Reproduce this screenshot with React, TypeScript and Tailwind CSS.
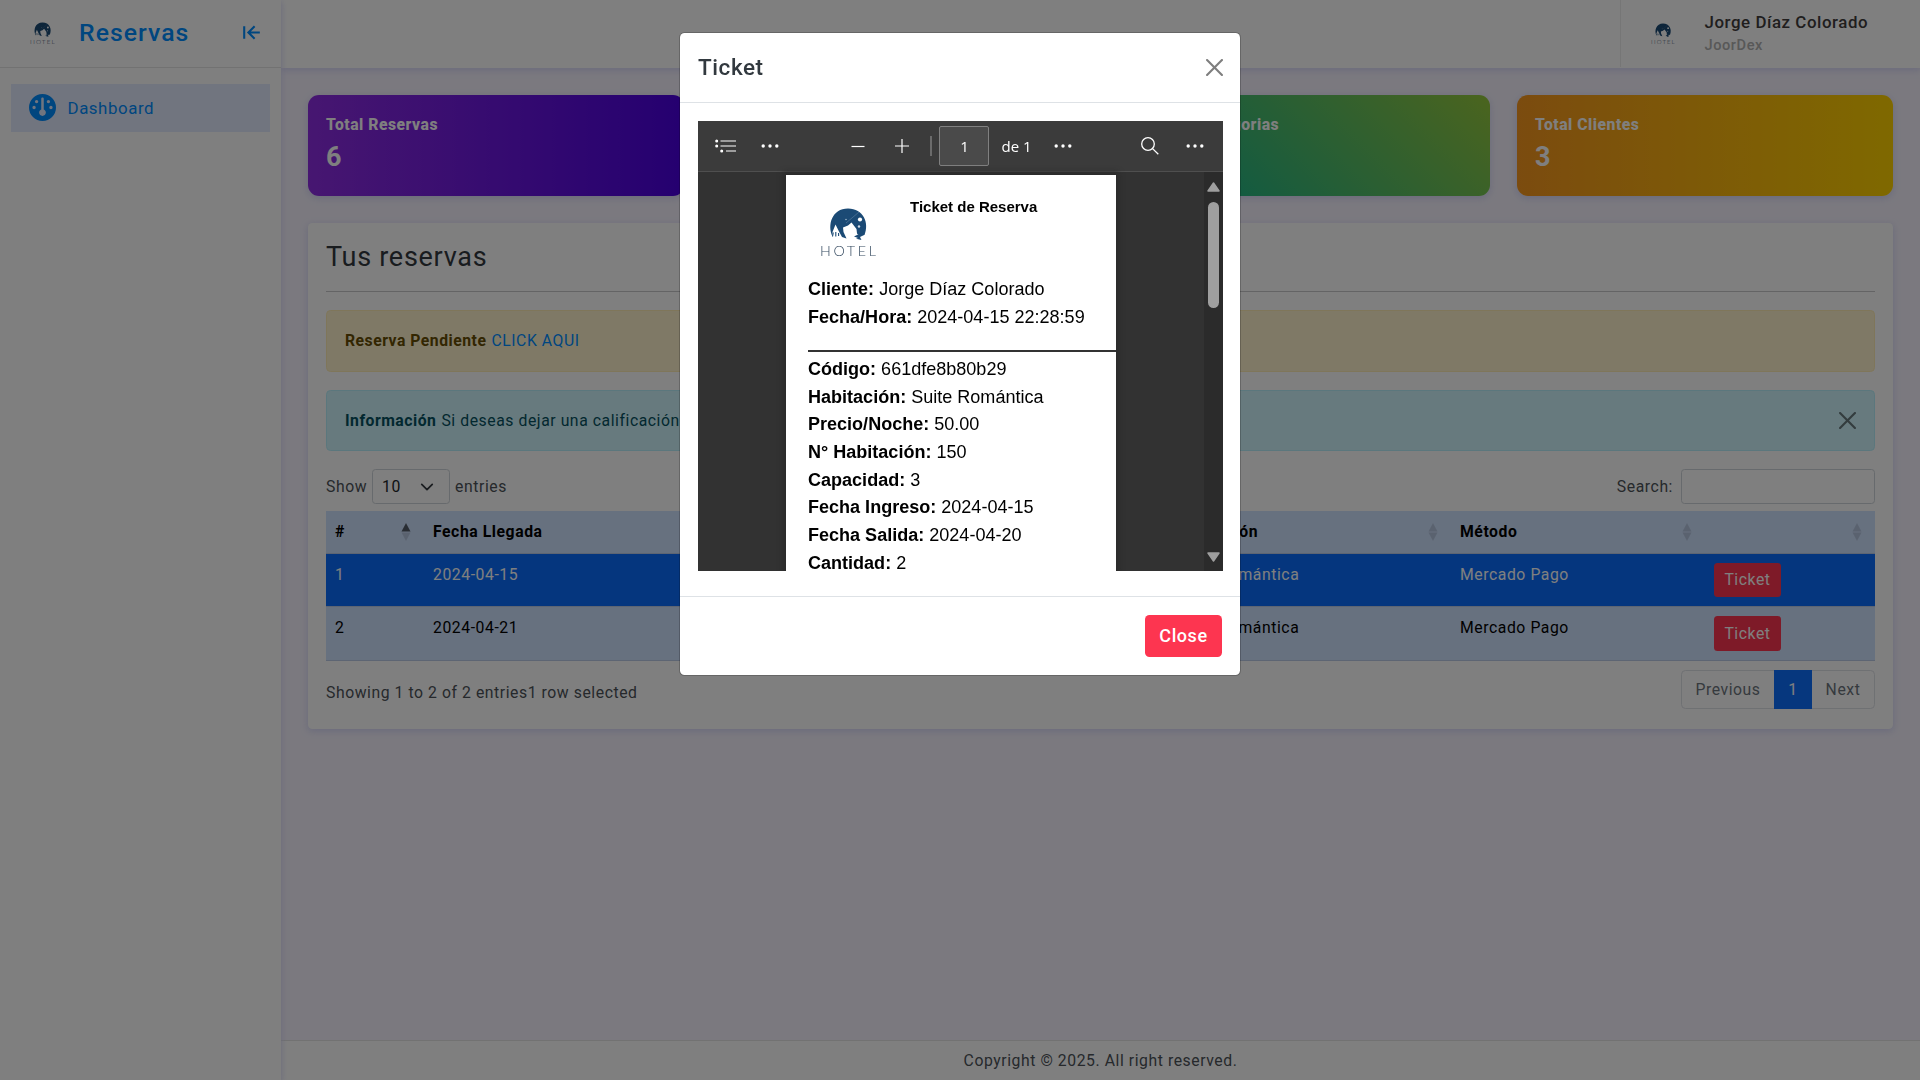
import React from "react";
import { BiArrowToLeft } from "react-icons/bi";
import { FaGauge } from "react-icons/fa6";

function HotelLogo({ className }: { className: string }) {
  return (
    <svg viewBox="0 0 60 54" className={className}>
      <path
        d="M14.500 31.500 C9 20 14 3.500 30 3.500 C45.500 3.500 51.500 18 46.500 30 L41 30.500 L39 28.500 L38.500 24 L33.500 17.500 L30 20.500 L25 22.500 L25.500 27 L28.500 33.500 L24 32 L21 26.500 L17.500 19.500 L14.500 27 Z"
        fill="#1b4a75"
      />
      <path d="M14.500 31.500 l.8 -4 M17.800 31.500 V27 M20.600 31 V28" stroke="#1b4a75" strokeWidth="1.100" />
      <path d="M36 31.500 L40 29.500 L46 30 L42 32 L43.500 35 L38 33.800 L40 33 Z" fill="#1b4a75" />
      <circle cx="42" cy="14.500" r="2.100" fill="#fff" />
      <circle cx="41" cy="21.500" r="1.200" fill="#cfdae5" />
      <circle cx="28" cy="14.500" r=".8" fill="#9db4c8" />
      <path d="M28 18 L41 7" stroke="#6d8ba8" strokeWidth=".5" />
      <text x="2" y="51" textLength="56" fontSize="14.300" fill="#34495f" fontFamily="Lato, sans-serif" fontWeight="300">HOTEL</text>
    </svg>
  );
}

function CloseX({ className }: { className: string }) {
  return (
    <svg viewBox="0 0 16 16" className={className}>
      <path
        fill="#000"
        d="M.293.293a1 1 0 011.414 0L8 6.586 14.293.293a1 1 0 111.414 1.414L9.414 8l6.293 6.293a1 1 0 01-1.414 1.414L8 9.414l-6.293 6.293a1 1 0 01-1.414-1.414L6.586 8 .293 1.707a1 1 0 010-1.414z"
      />
    </svg>
  );
}

function Sort({ asc = false }: { asc?: boolean }) {
  return (
    <svg viewBox="0 0 10 20" className="mr-[13px] h-[20px] w-[10px] shrink-0">
      <path d="M5 1 L9.500 9.500 H.5 Z" fill="#000" opacity={asc ? 0.6 : 0.125} />
      <path d="M5 19 L9.500 10.500 H.5 Z" fill="#000" opacity="0.125" />
    </svg>
  );
}

const stats = [
  { title: "Total Reservas", value: 6, bg: "bg-[linear-gradient(to_right,#8e2de2,#4a00e0)]" },
  { title: "Total Habitaciones", value: 5, bg: "bg-[linear-gradient(to_right,#f80759,#bc4e9c)]" },
  { title: "Total de Categorias", value: 3, bg: "bg-[linear-gradient(45deg,#00b09b,#96c93d)]" },
  { title: "Total Clientes", value: 3, bg: "bg-[linear-gradient(to_right,#f7971e,#ffd200)]" },
];

const headers = ["#", "Fecha Llegada", "", "", "Habitación", "Método", ""];
const rows = [
  ["1", "2024-04-15", "", "", "Suite Romántica", "Mercado Pago"],
  ["2", "2024-04-21", "", "", "Suite Romántica", "Mercado Pago"],
];
const cols = "grid grid-cols-[98px_300px_220px_223px_284px_254px_170px]";

const ticket = [
  ["Código:", "661dfe8b80b29"],
  ["Habitación:", "Suite Romántica"],
  ["Precio/Noche:", "50.00"],
  ["N° Habitación:", "150"],
  ["Capacidad:", "3"],
  ["Fecha Ingreso:", "2024-04-15"],
  ["Fecha Salida:", "2024-04-20"],
  ["Cantidad:", "2"],
];

function Dots() {
  return (
    <svg viewBox="0 0 18 4" className="h-1 w-[18px] shrink-0" fill="#fff">
      <circle cx="2.200" cy="2" r="1.700" />
      <circle cx="9" cy="2" r="1.700" />
      <circle cx="15.800" cy="2" r="1.700" />
    </svg>
  );
}

function Sidebar() {
  return (
    <aside className="z-10 w-[281px] shrink-0 bg-white shadow-[0_2px_6px_rgba(218,218,253,0.65),0_2px_6px_rgba(206,206,238,0.54)]">
      <div className="flex h-[68px] items-center border-b border-[#e4e4e4]">
        <HotelLogo className="ml-[29px] mt-[-1px] h-[24.300px] w-[27px]" />
        <span className="ml-[23px] mt-[-2px] text-[24.750px] font-medium tracking-[1.050px] text-[#008cff]">Reservas</span>
        <BiArrowToLeft className="ml-auto mr-[17px] mt-[-3px] size-[25px] text-[#008cff]" />
      </div>
      <div className="ml-[11px] mt-[16px] flex h-[48px] w-[259px] items-center bg-[#e2eafe] pl-[18px] text-[#008cff]">
        <FaGauge className="mt-[-1px] size-[27px]" />
        <span className="ml-[11.500px] mt-[1px] text-[16.875px]">Dashboard</span>
      </div>
    </aside>
  );
}

function Topbar() {
  return (
    <header className="flex h-[68px] justify-end bg-white shadow-[0_2px_6px_rgba(218,218,253,0.65),0_2px_6px_rgba(206,206,238,0.54)]">
      <div className="flex h-[67px] w-[300px] border-l border-[#ededed]">
        <HotelLogo className="ml-[29px] mt-[22px] h-[23px] w-[26px]" />
        <div className="ml-[28.500px] mt-[11px] font-medium">
          <p className="text-[16.875px] leading-[22px] text-[#413c3c]">Jorge Díaz Colorado</p>
          <p className="mt-[1px] text-[14.600px] leading-[22px] text-[#b0b0b0]">JoorDex</p>
        </div>
      </div>
    </header>
  );
}

function Reservations() {
  return (
    <section className="mt-[27px] h-[506px] rounded-[4.500px] bg-white px-[18px] pt-[18px] shadow-[0_2px_6px_rgba(218,218,253,0.65),0_2px_6px_rgba(206,206,238,0.54)]">
      <h4 className="h-[50px] text-[27px] leading-[32px] tracking-[0.720px] text-[#32393f]">Tus reservas</h4>
      <div className="h-px bg-[#c8c9ca]" />
      <div className="mt-[18px] flex h-[62px] items-center rounded-[4.500px] border border-[#ffecb5] bg-[#fff3cd] px-[18px] text-[#664d03]">
        <b className="tracking-[0.5px]">Reserva Pendiente</b>
        <span className="ml-[5px] text-[#008cff]">CLICK AQUI</span>
      </div>
      <div className="mt-[18px] flex h-[61px] items-center rounded-[4.500px] border border-[#b6effb] bg-[#cff4fc] px-[18px] text-[#055160]">
        <b className="tracking-[0.5px]">Información</b>
        <span className="ml-[5px]">Si deseas dejar una calificación</span>
        <CloseX className="ml-auto size-[17px] opacity-50" />
      </div>
      <div className="mt-[18px] flex h-[35px] items-center text-[#4c5258]">
        <span>Show</span>
        <div className="ml-[5px] flex h-[35px] w-[78px] items-center justify-between rounded-[3.500px] border border-[#ced4da] pl-[9px] pr-[15px] text-[#212529]">
          <span>10</span>
          <svg viewBox="0 0 16 16" className="size-[14px]">
            <path d="M2 5l6 6 6-6" fill="none" stroke="#343a40" strokeWidth="2" strokeLinecap="round" strokeLinejoin="round" />
          </svg>
        </div>
        <span className="ml-[5px]">entries</span>
        <span className="ml-auto">Search:</span>
        <div className="ml-[8px] h-[35px] w-[194px] rounded-[3.500px] border border-[#ced4da]" />
      </div>
      <div className="mt-[7px] text-black">
        <div className={`${cols} h-[43px] border-b border-[#bacbe6] bg-[#cfe2ff]`}>
          {headers.map((h, i) => (
            <div key={i} className="flex items-center justify-between pl-[9px] font-bold">
              <span>{h}</span>
              <Sort asc={i === 0} />
            </div>
          ))}
        </div>
        {rows.map((r, i) => (
          <div
            key={i}
            className={`${cols} ${i === 0 ? "h-[53px] bg-[#0a6dfc] text-white" : "h-[54px] bg-[#cfe2ff]"} border-b border-[#bacbe6]`}
          >
            {r.map((c, j) => (
              <span key={j} className="pl-[9px] pt-[8.500px] leading-[24px]">{c}</span>
            ))}
            <div className="pl-[9px] pt-[9px]">
              <div
                className={`${i === 0 ? "h-[34px]" : "h-[35px]"} flex w-[67px] items-center justify-center rounded-[3.500px] bg-[#fd3550] text-[15.750px] text-white`}
              >
                Ticket
              </div>
            </div>
          </div>
        ))}
      </div>
      <div className="mt-[9px] flex h-[39px] text-[#4c5258]">
        <span className="mt-[11px] leading-[24px]">Showing 1 to 2 of 2 entries1 row selected</span>
        <div className="ml-auto flex h-[39px] w-[194px] rounded-[4.500px] border border-[#dee2e6] text-[#6c757d]">
          <span className="flex w-[92px] items-center justify-center">Previous</span>
          <span className="my-[-1px] flex w-[38px] items-center justify-center bg-[#0d6efd] text-white">1</span>
          <span className="flex w-[62px] items-center justify-center">Next</span>
        </div>
      </div>
    </section>
  );
}

function PdfViewer() {
  return (
    <div className="ml-[18px] mr-[17px] mt-[18px] flex h-[450px] flex-col overflow-hidden bg-[#323232] tracking-normal">
      <div className="flex h-[51px] shrink-0 items-center border-b border-[#4f4f4f] bg-[#3b3b3b] text-white">
        <svg viewBox="0 0 22 14" className="ml-[17px] h-[14px] w-[22px] shrink-0" stroke="#fff" strokeWidth="1.200" fill="#fff">
          <path d="M5.500 2 H21 M5.500 7 H21 M11 12 H21" />
          <circle cx="1.700" cy="2" r=".9" />
          <circle cx="1.700" cy="7" r=".9" />
          <circle cx="6.700" cy="12" r=".9" />
        </svg>
        <span className="ml-[24px] flex"><Dots /></span>
        <svg viewBox="0 0 14 14" className="ml-[72px] size-[14px] shrink-0" stroke="#fff" strokeWidth="1.200">
          <path d="M.5 7.500 H13.500" />
        </svg>
        <svg viewBox="0 0 14 14" className="ml-[30px] size-[14px] shrink-0" stroke="#fff" strokeWidth="1.200">
          <path d="M0 7 H14 M7 0 V14" />
        </svg>
        <div className="ml-[21px] h-[20px] w-[2px] bg-[#6b6b6b]" />
        <div className="ml-[7px] flex h-[40px] w-[50px] items-center justify-center rounded-[2px] border border-[#808080] bg-[#4a4a4a] pl-[1px] font-['Open_Sans',sans-serif] text-[15px]">1</div>
        <span className="ml-[12.500px] w-[29px] whitespace-nowrap font-['Open_Sans',sans-serif] text-[15px]">de 1</span>
        <span className="ml-[23.500px] flex"><Dots /></span>
        <svg viewBox="0 0 18 18" className="ml-[69px] size-[18px] shrink-0" stroke="#fff" strokeWidth="1.300" fill="none">
          <circle cx="7" cy="7" r="6.300" />
          <path d="M11.600 11.600 L17.300 17.300" />
        </svg>
        <span className="ml-[27px] flex"><Dots /></span>
      </div>
      <div className="flex min-h-0 flex-1">
        <div className="ml-[88px] mt-[3px] w-[330px] bg-white pl-[22px] font-['Liberation_Sans',Arial,sans-serif] text-[18.050px] text-black shadow-[0_0_5px_3px_#2a2a2a]">
          <div className="flex h-[101px]">
            <HotelLogo className="ml-[10px] mt-[30px] h-[54px] w-[60px] shrink-0" />
            <b className="ml-[32px] mt-[23px] whitespace-nowrap text-[15px] leading-[18px]">Ticket de Reserva</b>
          </div>
          <p className="leading-[27.700px]"><b>Cliente:</b> Jorge Díaz Colorado</p>
          <p className="leading-[27.700px]"><b>Fecha/Hora:</b> 2024-04-15 22:28:59</p>
          <div className="mt-[18.500px] h-[2px] bg-[#333]" />
          <div className="mt-[4px]">
            {ticket.map(([k, v]) => (
              <p key={k} className="leading-[27.700px]"><b>{k}</b> {v}</p>
            ))}
          </div>
        </div>
        <div className="ml-auto flex w-[19px] flex-col items-center bg-[#2b2b2b]">
          <svg viewBox="0 0 13 10" className="mt-[10px] h-[10px] w-[13px]">
            <path d="M6.500 1 L12 9 H1 Z" fill="#9f9f9f" stroke="#9f9f9f" strokeWidth="1.500" strokeLinejoin="round" />
          </svg>
          <div className="mt-[10px] h-[106px] w-[11px] rounded-full bg-[#9f9f9f]" />
          <svg viewBox="0 0 13 10" className="mb-[9px] mt-auto h-[10px] w-[13px] rotate-180">
            <path d="M6.500 1 L12 9 H1 Z" fill="#9f9f9f" stroke="#9f9f9f" strokeWidth="1.500" strokeLinejoin="round" />
          </svg>
        </div>
      </div>
    </div>
  );
}

function TicketModal() {
  return (
    <div className="fixed inset-0 z-20 flex items-start justify-center bg-black/50 pt-[32px]">
      <div className="h-[644px] w-[562px] rounded-[5.500px] border border-black/20 bg-white bg-clip-padding">
        <div className="flex h-[70px] items-center justify-between border-b border-[#dee2e6] pl-[18px] pr-[17px]">
          <h5 className="text-[22.500px] font-medium text-[#32393f]">Ticket</h5>
          <CloseX className="size-[17px] opacity-50" />
        </div>
        <PdfViewer />
        <div className="mt-[25px] flex justify-end border-t border-[#dee2e6] pr-[18px] pt-[18px]">
          <button className="h-[42px] w-[77px] rounded-[4.500px] bg-[#fd3550] pb-[1px] text-[18px] font-medium text-white">Close</button>
        </div>
      </div>
    </div>
  );
}

export default function App() {
  return (
    <div className="flex h-[1080px] w-[1920px] overflow-hidden bg-[#f6f3fe] font-[Roboto,sans-serif] text-[15.750px] tracking-[0.5625px]">
      <Sidebar />
      <div className="flex flex-1 flex-col">
        <Topbar />
        <main className="flex-1 px-[27px] pt-[27px]">
          <div className="grid grid-cols-4 gap-[27px]">
            {stats.map((s) => (
              <div
                key={s.title}
                className={`${s.bg} h-[101px] rounded-[11px] px-[18px] pt-[18px] text-white shadow-[0_2px_6px_rgba(218,218,253,0.65),0_2px_6px_rgba(206,206,238,0.54)]`}
              >
                <p className="font-extrabold leading-[24px] tracking-[0.5px]">{s.title}</p>
                <p className="mt-[4px] text-[27px] font-bold leading-[32px]">{s.value}</p>
              </div>
            ))}
          </div>
          <Reservations />
        </main>
        <footer className="flex h-[40px] items-center justify-center border-t border-[#e4e4e4] bg-white text-[#4c5258]">
          Copyright © 2025. All right reserved.
        </footer>
      </div>
      <TicketModal />
    </div>
  );
}
